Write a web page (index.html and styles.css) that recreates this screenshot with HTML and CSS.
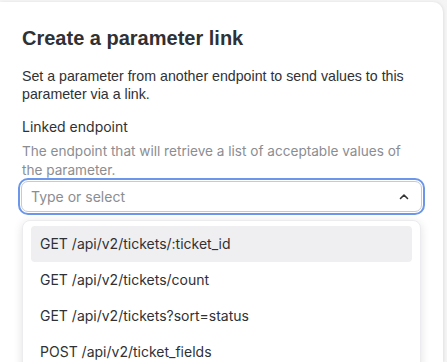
FILE: index.html
```html
<!DOCTYPE html>
<html lang="en">
<head>
    <meta charset="UTF-8">
    <title>Create a parameter link</title>
    <link rel="stylesheet" href="styles.css">
</head>
<body>
    <div class="backdrop">
        <div class="modal">
            <h1>Create a parameter link</h1>
            <p class="intro">Set a parameter from another endpoint to send values to this parameter via a link.</p>
            <div class="field">
                <label for="endpoint">Linked endpoint</label>
                <p class="hint">The endpoint that will retrieve a list of acceptable values of the parameter.</p>
                <div class="combo">
                    <input type="text" id="endpoint" placeholder="Type or select">
                    <svg class="chevron" width="12" height="12" viewBox="0 0 12 12"><path d="M2.5 7.5 6 4l3.5 3.5" fill="none" stroke="#333" stroke-width="1.6" stroke-linecap="round" stroke-linejoin="round"/></svg>
                </div>
                <ul class="menu">
                    <li class="active">GET /api/v2/tickets/:ticket_id</li>
                    <li>GET /api/v2/tickets/count</li>
                    <li>GET /api/v2/tickets?sort=status</li>
                    <li>POST /api/v2/ticket_fields</li>
                </ul>
            </div>
        </div>
    </div>
</body>
</html>
```

FILE: styles.css
```css
body { margin: 0; background: #f4f4f5; font-family: Inter, "Noto Sans", sans-serif; overflow: hidden; }
.backdrop { height: 362px; padding-top: 2px; box-sizing: border-box; }
.modal { width: 443px; height: 360px; overflow: hidden; background: white; border-radius: 0 10px 0 0; padding: 24px 22px 0 22px; box-sizing: border-box; box-shadow: 1px 0 3px rgba(0,0,0,0.08); }
h1 { margin: 0 0 17px 0; font-family: "Liberation Sans", Arial, sans-serif; font-weight: bold; font-size: 20px; line-height: 24px; color: #2f3134; }
.intro { margin: 0 0 14px 0; font-family: "Liberation Sans", Arial, sans-serif; font-size: 14.2px; line-height: 18px; color: #2f3134; }
.field label { display: block; font-size: 14px; line-height: 20px; color: #2f3134; margin-bottom: 5px; }
.hint { margin: 0 0 1px 0; font-size: 13.6px; line-height: 19px; color: #8b8d91; }
.combo { position: relative; margin: 0 -1px; }
.combo input { width: 100%; box-sizing: border-box; height: 31px; padding: 0 30px 0 9px; font-family: Inter, sans-serif; font-size: 14px; color: #2f3134; border: 1px solid #c9cacd; border-radius: 7px; outline: 2px solid #6b96ea; outline-offset: 1px; background: white; }
.combo input::placeholder { color: #8b8d91; }
.chevron { position: absolute; right: 12px; top: 10px; }
.menu { list-style: none; margin: 8px 0 0 0; padding: 5px 8px; border-radius: 8px; background: white; box-shadow: 0 2px 10px rgba(0,0,0,0.12); border: 1px solid #ececee; }
.menu li { height: 36px; line-height: 36px; padding: 0 9px; font-size: 14px; color: #2f3134; border-radius: 4px; }
.menu li.active { background: #efeff1; }
```
